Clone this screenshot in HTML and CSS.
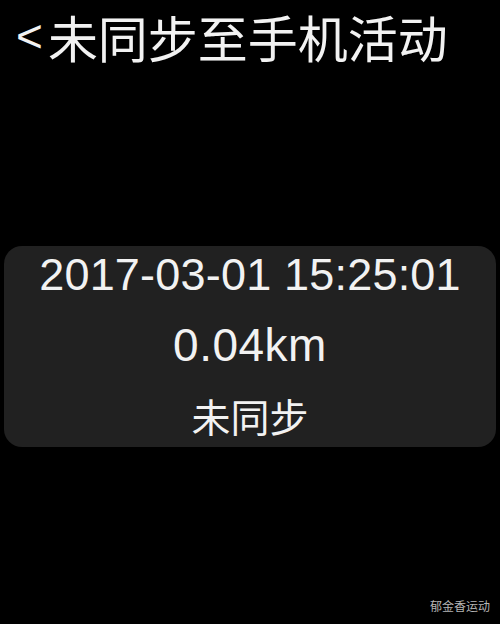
FILE: index.html
```html
<!DOCTYPE html>
<html lang="zh-CN">
<head>
<meta charset="utf-8">
<link rel="stylesheet" href="styles.css">
</head>
<body>
<div class="screen">
  <header class="title"><span class="back">&lt;</span>未同步至手机活动</header>
  <section class="card">
    <div class="row time">2017-03-01 15:25:01</div>
    <div class="row dist">0.04km</div>
    <div class="row status">未同步</div>
  </section>
  <footer class="mark">郁金香运动</footer>
</div>
</body>
</html>
```
FILE: styles.css
```css
html, body {
  margin: 0;
  padding: 0;
  background: #000;
}
.screen {
  width: 500px;
  height: 624px;
  display: flex;
  flex-direction: column;
  color: #f2f2f2;
  font-family: "Liberation Sans", "Noto Sans CJK SC", sans-serif;
}
.title {
  font-family: "Noto Sans CJK SC", sans-serif;
  font-size: 50px;
  line-height: 73px;
  height: 73px;
  padding: 0 0 0 16px;
  display: flex;
  align-items: center;
  white-space: nowrap;
}
.back {
  font-family: "Liberation Sans", sans-serif;
  font-size: 46px;
  margin-right: 5px;
}
.card {
  margin: 173px 4px 0;
  height: 201px;
  box-sizing: border-box;
  background: #212121;
  border-radius: 18px;
  display: flex;
  flex-direction: column;
  gap: 12px;
}
.row {
  height: 58px;
  line-height: 58px;
  text-align: center;
}
.time {
  font-size: 45px;
  letter-spacing: 0.2px;
}
.dist {
  font-size: 46px;
  letter-spacing: 0.5px;
}
.status {
  font-family: "Noto Sans CJK SC", sans-serif;
  font-size: 39px;
}
.mark {
  margin-top: auto;
  align-self: flex-end;
  padding: 0 10px 10px 0;
  font-family: "Noto Sans CJK SC", sans-serif;
  font-size: 12px;
  line-height: 16px;
  color: #b5b5b5;
}
```
